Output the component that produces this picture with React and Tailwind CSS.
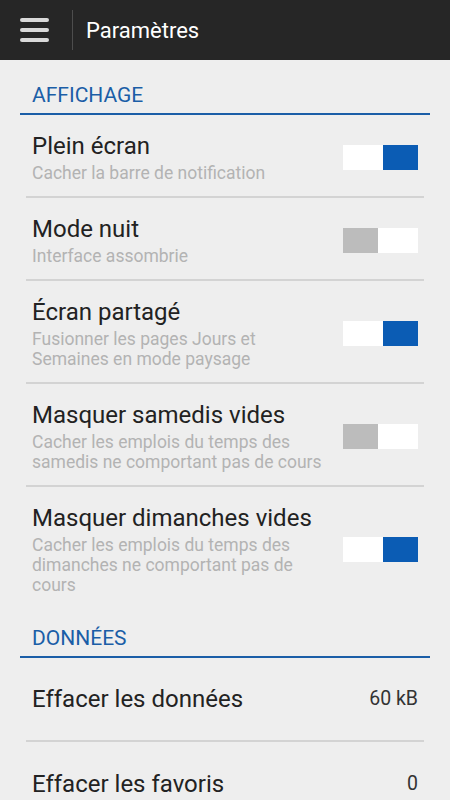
import React, { useState } from 'react'

const DISPLAY_PREFS = [
  { key: 'fullscreen', title: 'Plein écran', subtitle: 'Cacher la barre de notification', on: true },
  { key: 'night', title: 'Mode nuit', subtitle: 'Interface assombrie', on: false },
  { key: 'split', title: 'Écran partagé', subtitle: 'Fusionner les pages Jours et Semaines en mode paysage', on: true },
  { key: 'saturday', title: 'Masquer samedis vides', subtitle: 'Cacher les emplois du temps des samedis ne comportant pas de cours', on: false },
  { key: 'sunday', title: 'Masquer dimanches vides', subtitle: 'Cacher les emplois du temps des dimanches ne comportant pas de cours', on: true },
]

const DATA_PREFS = [
  { key: 'data', title: 'Effacer les données', value: '60 kB' },
  { key: 'favs', title: 'Effacer les favoris', value: '0' },
]

function Toggle({ on, onChange }) {
  return (
    <button onClick={onChange} className="flex w-[75px] h-[25px] shrink-0 bg-white">
      {on ? (
        <>
          <span className="w-[40px] h-full bg-white" />
          <span className="w-[35px] h-full bg-[#0b5cb4]" />
        </>
      ) : (
        <>
          <span className="w-[35px] h-full bg-[#bcbcbc]" />
          <span className="w-[40px] h-full bg-white" />
        </>
      )}
    </button>
  )
}

function SectionHeader({ label, className = '' }) {
  return (
    <div className={`mx-[20px] border-b-2 border-[#1b5ea7] px-[12px] pb-[6px] ${className}`}>
      <h2 className="text-[21px] leading-[24px] text-[#1b5ea7]">{label}</h2>
    </div>
  )
}

export default function App() {
  const [prefs, setPrefs] = useState(
    Object.fromEntries(DISPLAY_PREFS.map(p => [p.key, p.on]))
  )

  return (
    <div className="w-[450px] h-[800px] overflow-hidden bg-[#eeeeee] font-['Roboto',sans-serif]">
      {/* ── TOP BAR ── */}
      <header className="h-[60px] bg-[#262626] flex items-center">
        <div className="w-[72px] flex flex-col gap-[6px] pl-[20px]">
          <span className="w-[29px] h-[4px] rounded-sm bg-[#d9d9d9]" />
          <span className="w-[29px] h-[4px] rounded-sm bg-[#d9d9d9]" />
          <span className="w-[29px] h-[4px] rounded-sm bg-[#d9d9d9]" />
        </div>
        <div className="w-px h-[40px] bg-[#4d4d4d]" />
        <h1 className="pl-[13px] text-[22px] text-white">Paramètres</h1>
      </header>

      {/* ── AFFICHAGE ── */}
      <SectionHeader label="AFFICHAGE" className="pt-[23px]" />
      <div className="mx-[26px]">
        {DISPLAY_PREFS.map((p, i) => (
          <div
            key={p.key}
            className={`flex items-center pt-[17px] pb-[13px] pl-[6px] ${i < DISPLAY_PREFS.length - 1 ? 'border-b-2 border-[#d3d3d3]' : ''}`}
          >
            <div className="flex-1 min-w-0 pr-[16px]">
              <div className="text-[24px] leading-[28px] text-[#222]">{p.title}</div>
              <div className="mt-[3px] text-[17.5px] leading-[20px] text-[#b3b3b3]">{p.subtitle}</div>
            </div>
            <div className="pr-[6px]">
              <Toggle
                on={prefs[p.key]}
                onChange={() => setPrefs(prev => ({ ...prev, [p.key]: !prev[p.key] }))}
              />
            </div>
          </div>
        ))}
      </div>

      {/* ── DONNÉES ── */}
      <SectionHeader label="DONNÉES" className="pt-[18px]" />
      <div className="mx-[26px]">
        {DATA_PREFS.map((p, i) => (
          <div
            key={p.key}
            className={`flex items-center h-[84px] pl-[6px] pr-[6px] ${i < DATA_PREFS.length - 1 ? 'border-b-2 border-[#d3d3d3]' : ''}`}
          >
            <span className="flex-1 text-[24px] text-[#222]">{p.title}</span>
            <span className="text-[19.5px] text-[#333]">{p.value}</span>
          </div>
        ))}
      </div>
    </div>
  )
}
